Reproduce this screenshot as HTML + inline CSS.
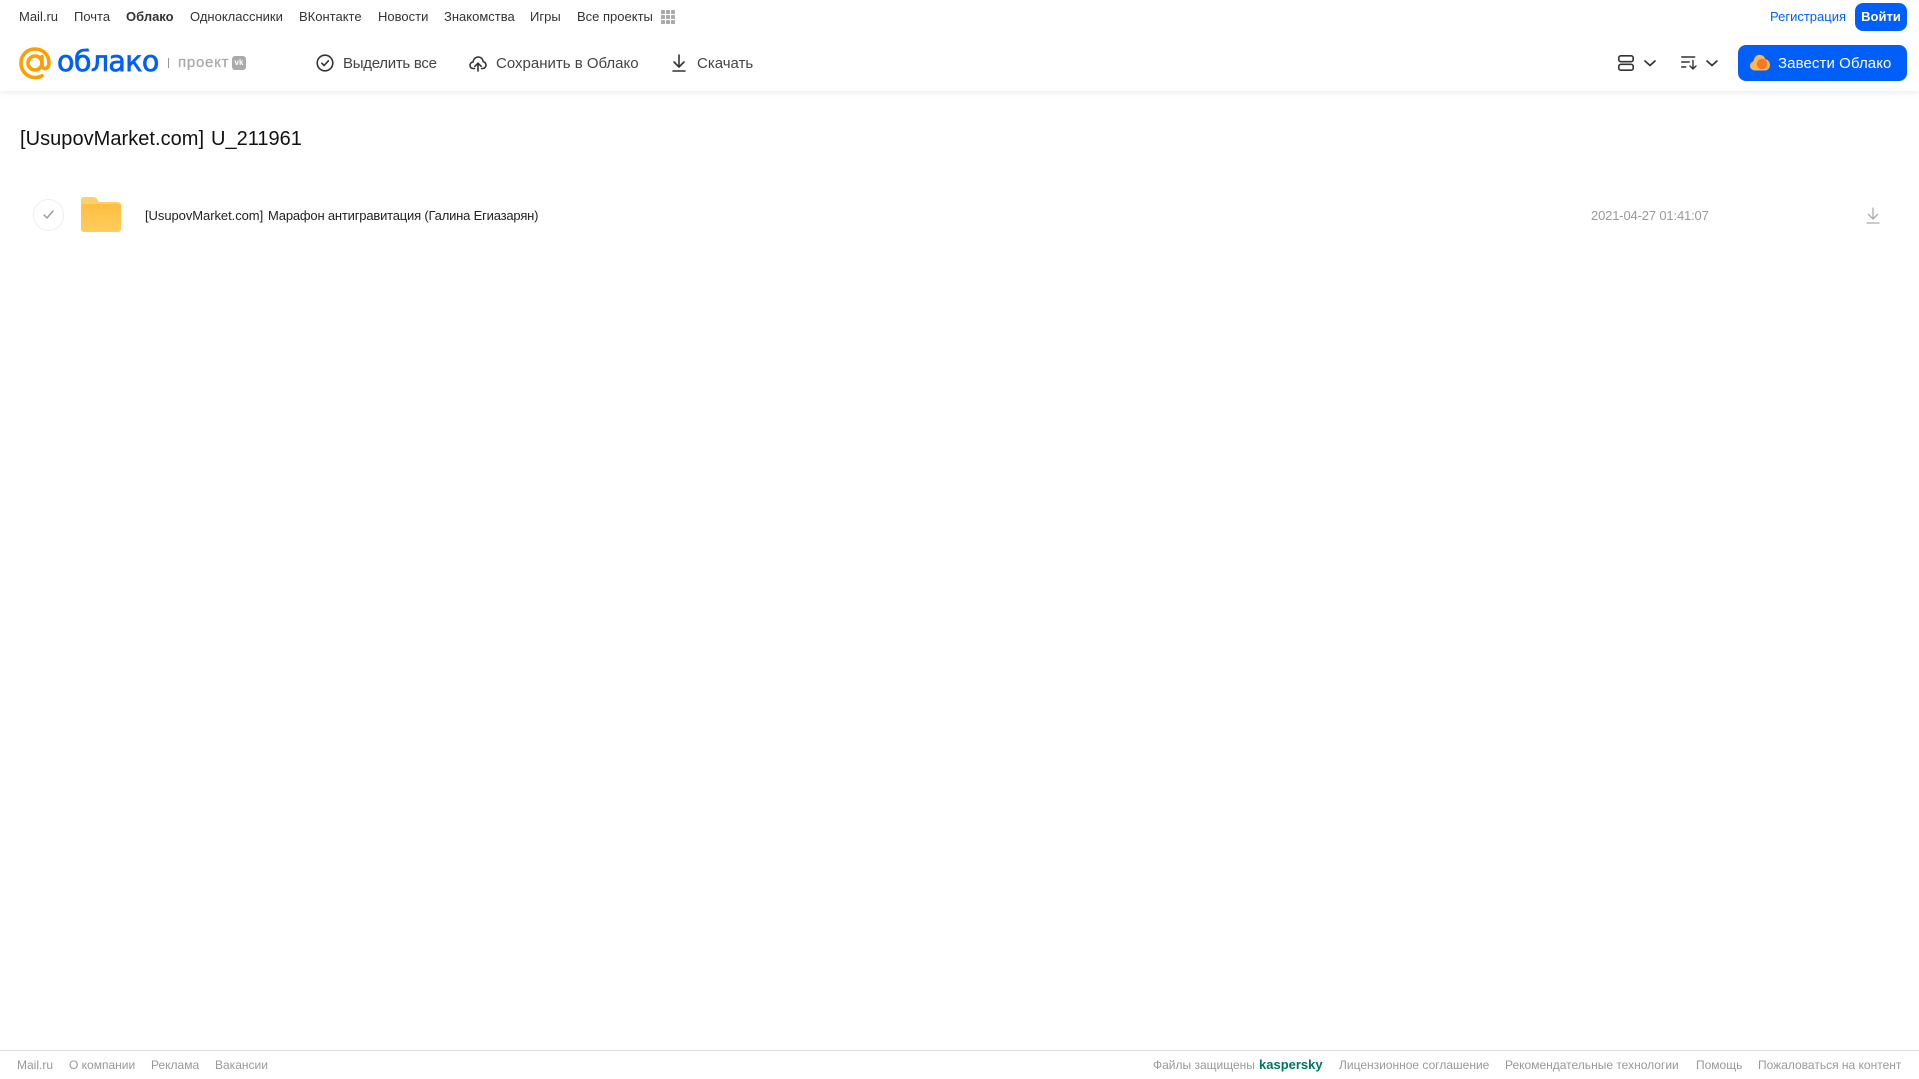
<!DOCTYPE html>
<html lang="ru"><head><meta charset="utf-8"><title>Облако</title>
<style>
html,body{margin:0;padding:0;background:#fff;width:1919px;height:1079px;overflow:hidden}
body{position:relative;font-family:"Liberation Sans",sans-serif}
.t{position:absolute;white-space:nowrap;line-height:20px}
.n{top:7px;font-size:13px;color:#333}
.b{top:54px;font-size:15px;color:#444}
.f{top:1055px;font-size:12px;color:#999}
svg{position:absolute;overflow:visible}
#hdr{position:absolute;left:0;top:0;width:1919px;height:91px;background:#fff;box-shadow:0 1px 6px rgba(0,0,0,.09)}
</style></head><body>
<div id="hdr"></div>
<span class="t n" style="left:19px">Mail.ru</span>
<span class="t n" style="left:74px">Почта</span>
<span class="t n" style="left:126px;font-weight:bold">Облако</span>
<span class="t n" style="left:190px">Одноклассники</span>
<span class="t n" style="left:299px">ВКонтакте</span>
<span class="t n" style="left:378px">Новости</span>
<span class="t n" style="left:444px">Знакомства</span>
<span class="t n" style="left:530px">Игры</span>
<span class="t n" style="left:577px">Все проекты</span>
<svg style="left:661px;top:10px" width="14" height="14" fill="#aaa"><rect x="0" y="0" width="4" height="4" rx=".8"/><rect x="5" y="0" width="4" height="4" rx=".8"/><rect x="10" y="0" width="4" height="4" rx=".8"/><rect x="0" y="5" width="4" height="4" rx=".8"/><rect x="5" y="5" width="4" height="4" rx=".8"/><rect x="10" y="5" width="4" height="4" rx=".8"/><rect x="0" y="10" width="4" height="4" rx=".8"/><rect x="5" y="10" width="4" height="4" rx=".8"/><rect x="10" y="10" width="4" height="4" rx=".8"/></svg>
<span class="t n" style="left:1770px;color:#005ff9">Регистрация</span>
<div style="position:absolute;left:1855px;top:3px;width:52px;height:28px;border-radius:8px;background:#005ff9;color:#fff;font-size:13px;font-weight:bold;line-height:27px;text-align:center">Войти</div>

<svg style="left:19px;top:47px" width="32" height="33" viewBox="0 0 32 33" fill="none" stroke="#ff9e00" stroke-width="3.6"><circle cx="16" cy="16" r="7"/><path d="M23 9.500V18c0 5 7 5 7-2C30 8 24 2 16 2S2 8 2 16s6 14.500 14 14.500c3 0 5-.6 7-1.700" stroke-linecap="round"/></svg>
<span class="t" style="left:57px;top:45px;font-size:28.500px;line-height:34px;color:#005ff9;font-family:'DejaVu Sans',sans-serif;letter-spacing:-.6px;-webkit-text-stroke:.7px #005ff9">облако</span>
<div style="position:absolute;left:168px;top:58px;width:1px;height:10px;background:#999"></div>
<span class="t" style="left:178px;top:53px;font-size:15px;color:#aaa;letter-spacing:.75px;-webkit-text-stroke:.3px #aaa">проект</span>
<div style="position:absolute;left:232px;top:56px;width:14px;height:14px;border-radius:3px;background:#aaa;color:#fff;font-size:8px;font-weight:bold;line-height:14px;text-align:center">vk</div>

<svg style="left:316px;top:54px" width="18" height="18" viewBox="0 0 18 18" fill="none" stroke="#333" stroke-width="1.6"><circle cx="9" cy="9" r="7.800"/><path d="M5.800 9.200l2.300 2.300 4.200-4.600" stroke-linecap="round" stroke-linejoin="round"/></svg>
<span class="t b" style="left:343px;letter-spacing:-.28px">Выделить все</span>
<svg style="left:469px;top:55px" width="18" height="17" viewBox="0 0 18 17" fill="none" stroke="#333" stroke-width="1.6" stroke-linecap="round" stroke-linejoin="round"><path d="M5.500 13.500H4.200C2.200 13.500 1 12 1 10.300c0-1.700 1.200-3 2.900-3.200C4.400 4.200 6.500 2 9.200 2c2.700 0 4.700 2 5 4.700 1.700.3 2.800 1.700 2.800 3.400 0 1.800-1.300 3.400-3.300 3.400h-1.200"/><path d="M9 16V8.500M5.800 11.300L9 8.200l3.200 3.100"/></svg>
<span class="t b" style="left:496px">Сохранить в Облако</span>
<svg style="left:672px;top:54px" width="14" height="18" viewBox="0 0 14 18" fill="none" stroke="#333" stroke-width="1.6" stroke-linecap="round" stroke-linejoin="round"><path d="M7 1v11.500M2 8l5 5 5-5M1 17h12"/></svg>
<span class="t b" style="left:697px">Скачать</span>

<svg style="left:1618px;top:55px" width="16" height="16" viewBox="0 0 16 16" fill="none" stroke="#333" stroke-width="1.600"><rect x=".8" y=".8" width="14.400" height="5.900" rx="2"/><rect x=".8" y="9.300" width="14.400" height="5.900" rx="2"/></svg>
<svg style="left:1644px;top:60px" width="12" height="7" viewBox="0 0 12 7" fill="none" stroke="#333" stroke-width="1.700" stroke-linecap="round" stroke-linejoin="round"><path d="M1 1l5 4.500L11 1"/></svg>
<svg style="left:1681px;top:56px" width="16" height="14" viewBox="0 0 16 14" fill="none" stroke="#333" stroke-width="1.400" stroke-linecap="round" stroke-linejoin="round"><path d="M.7 1h13M.7 6h7.500M.7 11h4M12 4.500V13M9 10l3 3 3-3"/></svg>
<svg style="left:1706px;top:60px" width="12" height="7" viewBox="0 0 12 7" fill="none" stroke="#333" stroke-width="1.700" stroke-linecap="round" stroke-linejoin="round"><path d="M1 1l5 4.500L11 1"/></svg>
<div style="position:absolute;left:1738px;top:45px;width:169px;height:36px;border-radius:8px;background:#005ff9"></div>
<svg style="left:1750px;top:54px" width="20" height="17" viewBox="0 0 20 17"><path d="M5 16.500C2 16.500 0 14.500 0 11.800c0-2.200 1.500-4 3.500-4.500C4 3.500 6.500 .8 9.500 .8c2.800 0 5 1.800 5.800 4.400C18 5.500 20 8 20 11c0 3-2.200 5.500-5.200 5.500z" fill="#ffb74a"/><circle cx="12" cy="10" r="5.200" fill="#f5772a"/></svg>
<span class="t" style="left:1778px;top:54px;font-size:15px;color:#fff;letter-spacing:.09px">Завести Облако</span>

<span class="t" style="left:20px;top:127px;font-size:20px;line-height:24px;color:#111;letter-spacing:.04px">[UsupovMarket.com]</span>
<span class="t" style="left:211px;top:127px;font-size:20px;line-height:24px;color:#111">U_211961</span>

<div style="position:absolute;left:33px;top:199px;border:1px solid #eee;border-radius:50%;box-sizing:border-box;width:31px;height:32px"></div>
<svg style="left:43px;top:210px" width="11" height="9" viewBox="0 0 11 9" fill="none" stroke="#999" stroke-width="1.400" stroke-linecap="round" stroke-linejoin="round"><path d="M1 5l3 3 6-7"/></svg>
<svg style="left:81px;top:197px" width="40" height="35" viewBox="0 0 40 35"><defs><linearGradient id="g" x1="0" y1="0" x2="0" y2="1"><stop offset="0" stop-color="#ffbf40"/><stop offset="1" stop-color="#ffcc5f"/></linearGradient></defs><path d="M0 3a3 3 0 0 1 3-3h9c2 0 3 .8 4 2l2 3h19a3 3 0 0 1 3 3V32a3 3 0 0 1-3 3H3a3 3 0 0 1-3-3z" fill="#ffcf6b"/><path d="M0 9a2 2 0 0 1 2-2h36a2 2 0 0 1 2 2v23a3 3 0 0 1-3 3H3a3 3 0 0 1-3-3z" fill="url(#g)"/></svg>
<span class="t" style="left:145px;top:206px;font-size:13px;color:#222;letter-spacing:-.06px">[UsupovMarket.com]</span>
<span class="t" style="left:268px;top:206px;font-size:13px;color:#222;letter-spacing:-.19px">Марафон антигравитация (Галина Егиазарян)</span>
<span class="t" style="left:1591px;top:206px;font-size:13px;color:#999;letter-spacing:-.16px">2021-04-27 01:41:07</span>
<svg style="left:1866px;top:207px" width="14" height="17" viewBox="0 0 14 17" fill="none" stroke="#aaa" stroke-width="1.300" stroke-linecap="round" stroke-linejoin="round"><path d="M7 1v10.500M2.500 7.500L7 12l4.500-4.500M1 16h12"/></svg>

<div style="position:absolute;left:0;top:1050px;width:1919px;height:1px;background:#ddd"></div>
<span class="t f" style="left:17px">Mail.ru</span>
<span class="t f" style="left:69px">О компании</span>
<span class="t f" style="left:151px">Реклама</span>
<span class="t f" style="left:215px">Вакансии</span>
<span class="t f" style="left:1153px">Файлы защищены</span>
<span class="t f" style="left:1259px;color:#00755f;font-weight:bold;font-size:13px">kaspersky</span>
<span class="t f" style="left:1339px">Лицензионное соглашение</span>
<span class="t f" style="left:1505px">Рекомендательные технологии</span>
<span class="t f" style="left:1696px">Помощь</span>
<span class="t f" style="left:1758px">Пожаловаться на контент</span>
</body></html>
